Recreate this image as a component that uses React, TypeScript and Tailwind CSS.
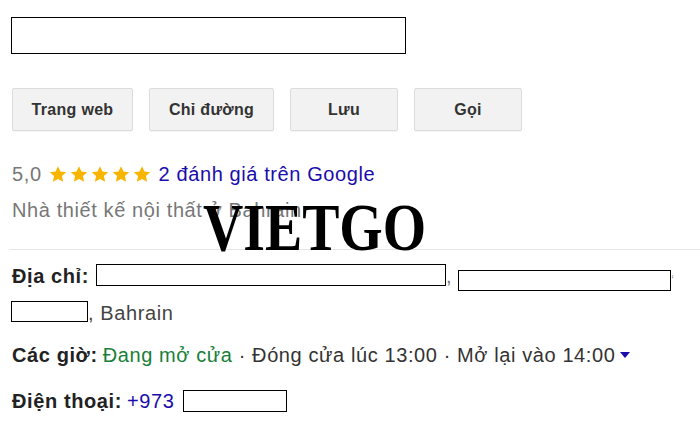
import React from "react";

function Star() {
  return (
    <svg width="20" height="19" viewBox="0 0 24 24" className="shrink-0">
      <path
        d="M12 1.5l3.1 6.7 7.3.8-5.5 5 1.6 7.2L12 17.6l-6.5 3.6 1.6-7.2-5.5-5 7.3-.8z"
        fill="#f8b500"
      />
    </svg>
  );
}

function Btn({ label, w }: { label: string; w: string }) {
  return (
    <div
      className={`${w} h-[43px] flex items-center justify-center rounded-[2px] border border-[#dcdcdc] bg-[#f2f2f2] text-[16px] font-bold tracking-[0.3px] text-[#333] shadow-[0_1px_0_rgba(0,0,0,0.04)]`}
    >
      {label}
    </div>
  );
}

export default function App() {
  return (
    <div className="relative w-[700px] h-[425px] overflow-hidden bg-white font-['Liberation_Sans',Arial,sans-serif] text-[20px] leading-[24px] tracking-[0.6px]">
      <div className="pt-[17px] pl-[11px]">
        <div className="w-[395px] h-[37px] border border-black" />
      </div>

      <div className="mt-[34px] pl-3 flex gap-4">
        <Btn label="Trang web" w="w-[121px]" />
        <Btn label="Chỉ đường" w="w-[125px]" />
        <Btn label="Lưu" w="w-[108px]" />
        <Btn label="Gọi" w="w-[108px]" />
      </div>

      <div className="mt-[31px] pl-3 flex items-center">
        <span className="text-[#777]">5,0</span>
        <span className="ml-[6px] flex gap-[1px]">
          <Star />
          <Star />
          <Star />
          <Star />
          <Star />
        </span>
        <span className="ml-[7px] text-[#1a0dab]">2 đánh giá trên Google</span>
      </div>

      <div className="mt-[12px] pl-3 text-[#777]">
        Nhà thiết kế nội thất ở Bahrain
      </div>

      <div className="mt-[27px] ml-[9px] h-px bg-[#e6e6e6]" />

      <div className="mt-[14px] pl-3 flex items-start">
        <span className="font-bold text-[#222]">Địa chỉ:</span>
        <span className="ml-[7px] w-[350px] h-[22px] border border-black bg-white" />
        <span className="text-[#777]">,</span>
        <span className="ml-[6px] mt-[6px] w-[213px] h-[21px] border border-black bg-white" />
        <span className="text-[#999] mt-[4px] text-[12px]">‘</span>
      </div>

      <div className="mt-[9px] pl-[11px] flex items-start">
        <span className="w-[77px] h-[21px] border border-black bg-white" />
        <span className="text-[#444]">, Bahrain</span>
      </div>

      <div className="mt-[18px] pl-3 flex items-center">
        <span className="font-bold text-[#222]">Các giờ:</span>
        <span className="ml-[5px] text-[#188038]">Đang mở cửa</span>
        <span className="text-[#333]">&nbsp;· Đóng cửa lúc 13:00 · Mở lại vào 14:00</span>
        <svg width="10" height="6" viewBox="0 0 10 6" className="ml-[5px]">
          <path d="M0 0h10L5 6z" fill="#1a0dab" />
        </svg>
      </div>

      <div className="mt-[22px] pl-3 flex items-center">
        <span className="font-bold text-[#222]">Điện thoại:</span>
        <span className="ml-[5px] text-[#1a0dab]">+973</span>
        <span className="ml-[9px] w-[104px] h-[22px] border border-black bg-white" />
      </div>

      <div className="absolute left-[203px] top-[193px] origin-left scale-x-[0.82] font-['Liberation_Serif','Times_New_Roman',serif] font-bold text-[68px] leading-none tracking-normal text-black">
        VIETGO
      </div>
    </div>
  );
}
